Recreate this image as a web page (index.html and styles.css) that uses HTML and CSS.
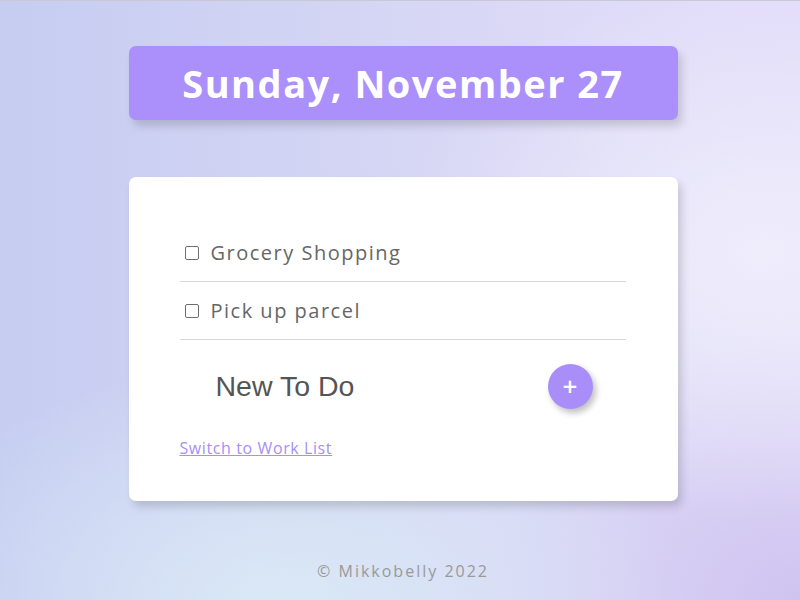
FILE: index.html
```html
<!DOCTYPE html>
<html lang="en">
<head>
<meta charset="utf-8">
<title>To Do List</title>
<link rel="stylesheet" href="styles.css">
</head>
<body>
<div class="page">
  <div class="heading">
    <h1>Sunday, November 27</h1>
  </div>
  <div class="box">
    <form class="item">
      <input type="checkbox" class="check">
      <p>Grocery Shopping</p>
    </form>
    <form class="item">
      <input type="checkbox" class="check">
      <p>Pick up parcel</p>
    </form>
    <form class="new-item">
      <input type="text" class="new-input" placeholder="New To Do" value="">
      <button type="button" class="add">+</button>
    </form>
    <a class="switch" href="#">Switch to Work List</a>
  </div>
  <footer class="footer">© Mikkobelly 2022</footer>
</div>
</body>
</html>
```

FILE: styles.css
```css
html, body {
  margin: 0;
  padding: 0;
}
body {
  min-height: 600px;
  font-family: "Open Sans", "Noto Sans", sans-serif;
  background-color: #d8d8f4;
  background-image:
    radial-gradient(ellipse 45% 45% at 95% 42%, rgba(240,238,252,0.95), rgba(240,238,252,0) 100%),
    radial-gradient(ellipse 50% 40% at 35% 100%, rgba(218,234,246,0.95), rgba(218,234,246,0) 100%),
    radial-gradient(ellipse 40% 45% at 100% 100%, rgba(206,194,240,0.95), rgba(206,194,240,0) 100%),
    radial-gradient(ellipse 40% 40% at 100% 0%, rgba(226,220,250,0.9), rgba(226,220,250,0) 100%),
    linear-gradient(90deg, #c6cdf1 0%, #d6d6f5 50%, #e2def8 100%);
  border-top: 1px solid #c8c8d8;
  box-sizing: border-box;
}
.page {
  width: 549px;
  margin: 0 auto;
  padding-top: 45px;
  position: relative;
  left: 3px;
}
.heading {
  background: #ab8ffb;
  border-radius: 7px;
  height: 74px;
  display: flex;
  align-items: center;
  justify-content: center;
  box-shadow: 4px 6px 8px rgba(0,0,0,0.15);
}
.heading h1 {
  margin: 0;
  color: #fff;
  font-size: 38px;
  font-weight: 700;
  letter-spacing: 1.5px;
}
.box {
  margin-top: 57px;
  background: #fff;
  border-radius: 7px;
  height: 324px;
  box-sizing: border-box;
  padding: 47px 52px 0 51px;
  box-shadow: 4px 6px 8px rgba(0,0,0,0.15);
}
.item {
  display: flex;
  align-items: center;
  height: 57px;
  border-bottom: 1px solid #d8d8d8;
  padding-left: 5px;
}
.check {
  appearance: none;
  -webkit-appearance: none;
  box-sizing: border-box;
  margin: 0 12px 0 0;
  width: 14px;
  height: 14px;
  border: 1px solid #6f6f6f;
  border-radius: 2px;
  background: #fff;
}
.item p {
  margin: 0;
  font-size: 20px;
  color: #666;
  letter-spacing: 1.5px;
}
.new-item {
  display: flex;
  align-items: center;
  height: 92px;
  padding-bottom: 2px;
}
.new-input {
  border: none;
  outline: none;
  background: transparent;
  font-family: "Liberation Sans", Arial, sans-serif;
  font-size: 28.5px;
  color: #555;
  padding: 0 0 0 36px;
  width: 300px;
}
.new-input::placeholder {
  color: #555;
  opacity: 1;
}
.add {
  margin-left: auto;
  margin-right: 33px;
  width: 45px;
  height: 45px;
  border-radius: 50%;
  border: none;
  background: #a98ef9;
  color: #fff;
  font-family: "Open Sans", sans-serif;
  font-size: 26px;
  font-weight: 600;
  line-height: 45px;
  padding: 0;
  box-shadow: 3px 4px 6px rgba(0,0,0,0.25);
}
.switch {
  display: inline-block;
  margin-top: 3px;
  color: #a88ef8;
  font-size: 16px;
  letter-spacing: 0.6px;
}
.footer {
  text-align: center;
  color: #999;
  font-size: 16px;
  letter-spacing: 2px;
  margin-top: 59px;
}
```
